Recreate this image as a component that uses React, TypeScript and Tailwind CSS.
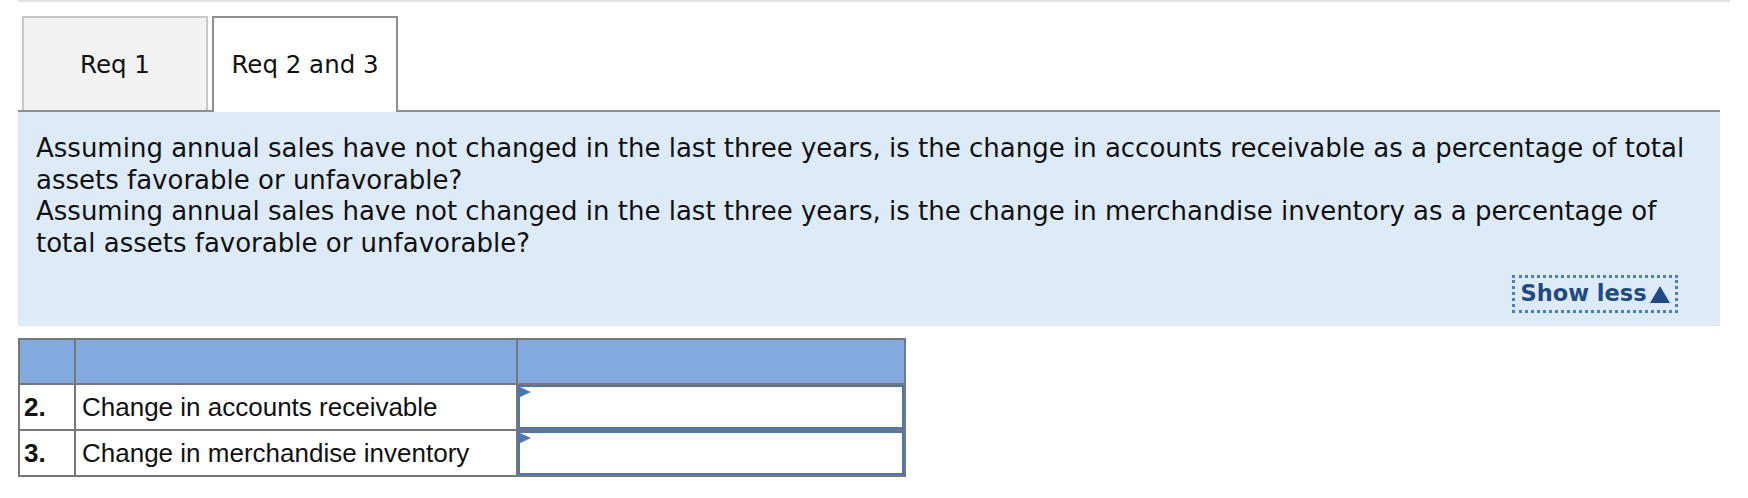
import React from "react";

export default function App() {
  const q = "font-['DejaVu_Sans',Verdana,sans-serif]";
  return (
    <div className="w-[1748px] h-[498px] bg-white text-[#111]">
      <div className="h-[2px] w-[1712px] ml-[18px] bg-[#e2e2e2]" />
      <div className="mt-[14px] ml-[18px] w-[1702px] h-[96px] flex items-end border-b-2 border-[#8f8f8f]">
        <div className={`ml-[4px] w-[186px] h-[94px] border-2 border-b-0 border-[#c8c8c8] bg-[#f2f2f2] flex items-center justify-center pt-[2px] text-[24.5px] text-[#111] ${q}`}>
          Req 1
        </div>
        <div className={`ml-[4px] w-[186px] h-[96px] -mb-[2px] border-2 border-b-0 border-[#8f8f8f] bg-white flex items-center justify-center text-[24.5px] text-[#111] ${q}`}>
          Req 2 and 3
        </div>
      </div>
      <div className="ml-[18px] w-[1702px] h-[214px] bg-[#ddebf8] flex flex-col">
        <div className={`pl-[18px] pt-[21px] text-[26px] leading-[31.5px] whitespace-nowrap ${q}`}>
          <p>
            Assuming annual sales have not changed in the last three years, is the change in accounts receivable as a percentage of total
            <br />
            assets favorable or unfavorable?
          </p>
          <p>
            Assuming annual sales have not changed in the last three years, is the change in merchandise inventory as a percentage of
            <br />
            total assets favorable or unfavorable?
          </p>
        </div>
        <div className="mt-auto pb-[13px] pr-[42px] flex justify-end">
          <div className={`h-[38px] w-[166px] border-[3px] border-dotted border-[#4a7cc2] flex items-center justify-center text-[22.5px] font-bold text-[#1f4a85] ${q}`}>
            Show less
            <svg className="ml-[3px]" width="20" height="17" viewBox="0 0 20 17">
              <polygon points="10,0 20,17 0,17" fill="#1f4a85" />
            </svg>
          </div>
        </div>
      </div>
      <div className="mt-[12px] ml-[18px] w-[888px] grid grid-cols-[54px_440px_386px] grid-rows-[43px_44px_44px] gap-[2px] p-[2px] bg-[#777777] font-['Liberation_Sans',Arial,sans-serif] text-[26px] text-[#111]">
        <div className="bg-[#82aadf]" />
        <div className="bg-[#82aadf]" />
        <div className="bg-[#82aadf]" />
        <div className="bg-white flex items-center pl-[4px] font-bold">2.</div>
        <div className="bg-white flex items-center pl-[6px]">Change in accounts receivable</div>
        <div className="bg-white relative border-2 border-[#4a77b4]">
          <svg className="absolute left-0 top-0" width="11" height="11" viewBox="0 0 11 11">
            <polygon points="0,0 11,5 0,10" fill="#4a77b4" />
          </svg>
        </div>
        <div className="bg-white flex items-center pl-[4px] font-bold">3.</div>
        <div className="bg-white flex items-center pl-[6px]">Change in merchandise inventory</div>
        <div className="bg-white relative border-2 border-[#4a77b4]">
          <svg className="absolute left-0 top-0" width="11" height="11" viewBox="0 0 11 11">
            <polygon points="0,0 11,5 0,10" fill="#4a77b4" />
          </svg>
        </div>
      </div>
    </div>
  );
}
